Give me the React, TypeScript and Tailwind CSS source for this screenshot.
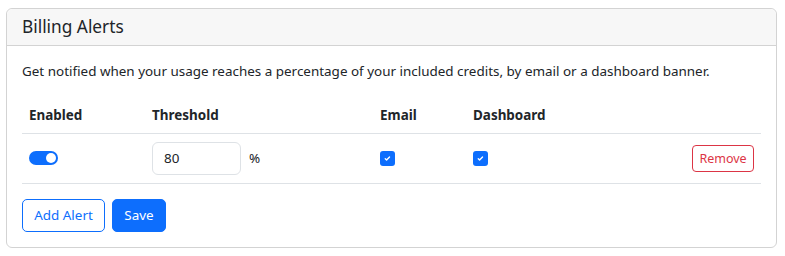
import React from 'react';

function Toggle() {
  return (
    <span className="flex h-[14px] w-[29px] items-center justify-end rounded-full bg-[#0d6efd] px-[2px]">
      <span className="h-[10px] w-[10px] rounded-full bg-white" />
    </span>
  );
}

function Check() {
  return (
    <span className="flex h-[15px] w-[15px] items-center justify-center rounded-[3px] bg-[#0d6efd]">
      <svg width="9" height="9" viewBox="0 0 20 20">
        <path d="M5 10.5l3 3 6.5-7" fill="none" stroke="#fff" strokeWidth="3" strokeLinecap="round" strokeLinejoin="round" />
      </svg>
    </span>
  );
}

export default function App() {
  return (
    <div className="pl-[6px] pt-[8px] font-['Noto_Sans',sans-serif] text-[#212529]">
      <div className="w-[771px] rounded-[6px] border border-[#d3d3d3]">
        <div className="rounded-t-[6px] border-b border-[#d3d3d3] bg-[#f7f7f7] px-[15px] py-[7px] text-[17.3px] leading-[22px]">
          Billing Alerts
        </div>
        <div className="px-[15px] pb-[15px] pt-[15px]">
          <p className="mb-[16px] text-[13.45px] leading-[21px]">
            Get notified when your usage reaches a percentage of your included credits, by email or a dashboard banner.
          </p>
          <table className="w-full border-collapse text-[13.45px] leading-[21px]">
            <thead>
              <tr className="border-b border-[#dee2e6] text-left font-bold">
                <th className="w-[123px] px-[7px] py-[7px]">Enabled</th>
                <th className="w-[228px] px-[7px] py-[7px]">Threshold</th>
                <th className="w-[93px] px-[7px] py-[7px]">Email</th>
                <th className="px-[7px] py-[7px]">Dashboard</th>
                <th className="px-[7px] py-[7px]" />
              </tr>
            </thead>
            <tbody>
              <tr className="border-b border-[#dee2e6]">
                <td className="px-[7px] py-[8px]">
                  <div className="flex h-[33px] items-center pb-[1px]">
                    <Toggle />
                  </div>
                </td>
                <td className="px-[7px] py-[8px]">
                  <div className="flex items-center gap-[8px]">
                    <div className="flex h-[33px] w-[89px] items-center rounded-[6px] border border-[#dee2e6] px-[11px]">80</div>
                    <span>%</span>
                  </div>
                </td>
                <td className="px-[7px] py-[8px]">
                  <div className="flex h-[33px] items-center">
                    <Check />
                  </div>
                </td>
                <td className="px-[7px] py-[8px]">
                  <div className="flex h-[33px] items-center">
                    <Check />
                  </div>
                </td>
                <td className="px-[7px] py-[8px]">
                  <div className="flex h-[33px] items-center justify-end">
                    <button className="h-[27px] w-[62px] rounded-[4px] border border-[#dc3545] text-[12.5px] leading-[18px] text-[#dc3545]">
                      Remove
                    </button>
                  </div>
                </td>
              </tr>
            </tbody>
          </table>
          <div className="mt-[15px] flex gap-[7px]">
            <button className="h-[33px] w-[83px] rounded-[5px] border border-[#0d6efd] text-[13.45px] text-[#0d6efd]">Add Alert</button>
            <button className="h-[33px] w-[54px] rounded-[5px] border border-[#0d6efd] bg-[#0d6efd] text-[13.45px] text-white">Save</button>
          </div>
        </div>
      </div>
    </div>
  );
}
